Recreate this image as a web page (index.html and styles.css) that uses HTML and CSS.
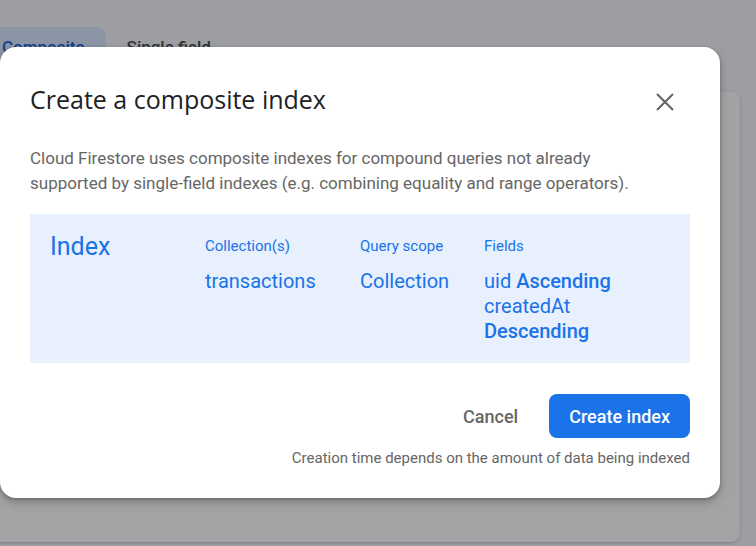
FILE: index.html
```html
<!DOCTYPE html>
<html lang="en">
<head>
<meta charset="utf-8">
<title>Create a composite index</title>
<link rel="stylesheet" href="styles.css">
</head>
<body>
<div class="page">
  <div class="tabs">
    <div class="tab tab-active">Composite</div>
    <div class="tab">Single field</div>
  </div>
  <div class="card"></div>
</div>
<div class="scrim"></div>
<div class="dialog" role="dialog" aria-labelledby="dlg-title">
  <div class="dialog-header">
    <h2 class="dialog-title" id="dlg-title">Create a composite index</h2>
    <button class="close-btn" aria-label="Close">
      <svg width="18" height="18" viewBox="0 0 18 18" aria-hidden="true">
        <path d="M1 1L17 17M17 1L1 17" stroke="#5f6368" stroke-width="2" fill="none"/>
      </svg>
    </button>
  </div>
  <p class="dialog-desc">Cloud Firestore uses composite indexes for compound queries not already supported by single-field indexes (e.g. combining equality and range operators).</p>
  <div class="index-panel">
    <div class="index-name">Index</div>
    <div class="index-col">
      <div class="col-label">Collection(s)</div>
      <div class="col-value">transactions</div>
    </div>
    <div class="index-col">
      <div class="col-label">Query scope</div>
      <div class="col-value">Collection</div>
    </div>
    <div class="index-col">
      <div class="col-label">Fields</div>
      <div class="col-value">uid <b>Ascending</b> createdAt <b>Descending</b></div>
    </div>
  </div>
  <div class="dialog-actions">
    <button class="btn btn-text">Cancel</button>
    <button class="btn btn-primary">Create index</button>
  </div>
  <div class="dialog-note">Creation time depends on the amount of data being indexed</div>
</div>
</body>
</html>
```
FILE: styles.css
```css
html, body {
  margin: 0;
  padding: 0;
}
body {
  width: 756px;
  height: 546px;
  overflow: hidden;
  position: relative;
  background: #f0f2f5;
  font-family: Roboto, "Liberation Sans", Arial, sans-serif;
}
.page {
  padding-top: 27px;
}
.tabs {
  display: flex;
  margin-left: -19px;
}
.tab {
  height: 40px;
  line-height: 40px;
  padding: 0 21px;
  font-size: 17px;
  font-weight: 500;
  color: #3c4043;
  border-radius: 10px;
}
.tab-active {
  background: #d3e3fd;
  color: #0b57d0;
}
.card {
  margin-top: 25px;
  margin-left: -20px;
  width: 760px;
  height: 450px;
  background: #fbfbfc;
  border-radius: 8px;
  box-shadow: 0 1px 3px rgba(60, 64, 67, 0.3);
}
.scrim {
  position: absolute;
  inset: 0;
  background: rgba(32, 33, 36, 0.4);
}
.dialog {
  position: absolute;
  left: 0;
  top: 47px;
  width: 720px;
  box-sizing: border-box;
  padding: 36px 30px 30px 30px;
  background: #fff;
  border-radius: 16px;
  box-shadow: 0 4px 8px rgba(0, 0, 0, 0.25), 0 1px 3px rgba(0, 0, 0, 0.2);
}
.dialog-header {
  display: flex;
  align-items: center;
  justify-content: space-between;
  height: 32px;
}
.dialog-title {
  margin: 0;
  font-family: "Open Sans", Roboto, sans-serif;
  font-weight: 400;
  font-size: 25px;
  line-height: 32px;
  color: #202124;
}
.close-btn {
  border: 0;
  background: none;
  padding: 0;
  margin: 5px 16px 0 0;
  width: 18px;
  height: 18px;
  display: flex;
  cursor: pointer;
}
.dialog-desc {
  margin: 31px 0 18px;
  max-width: 630px;
  font-size: 17px;
  line-height: 25px;
  color: #666;
}
.index-panel {
  display: grid;
  grid-template-columns: 155px 155px 124px 1fr;
  align-items: start;
  background: #e8f0fe;
  padding: 16px 50px 19px 20px;
  color: #1a73e8;
}
.index-name {
  margin-top: 3px;
  font-size: 25px;
  line-height: 28px;
}
.col-label {
  font-size: 15px;
  line-height: 20px;
  padding-top: 6px;
}
.col-value {
  margin-top: 13px;
  font-size: 20px;
  line-height: 25px;
}
.col-value b {
  font-weight: 500;
}
.dialog-actions {
  display: flex;
  justify-content: flex-end;
  align-items: center;
  gap: 15px;
  margin-top: 31px;
}
.btn {
  font-family: Roboto, "Liberation Sans", Arial, sans-serif;
  font-size: 18px;
  font-weight: 500;
  height: 44px;
  border: 0;
  border-radius: 8px;
  padding: 0 20px;
  cursor: pointer;
}
.btn-text {
  background: none;
  color: #666;
  padding: 0 16px;
}
.btn-primary {
  background: #1a73e8;
  color: #fff;
}
.dialog-note {
  margin-top: 10px;
  text-align: right;
  font-size: 15px;
  line-height: 20px;
  color: #666;
}
```
